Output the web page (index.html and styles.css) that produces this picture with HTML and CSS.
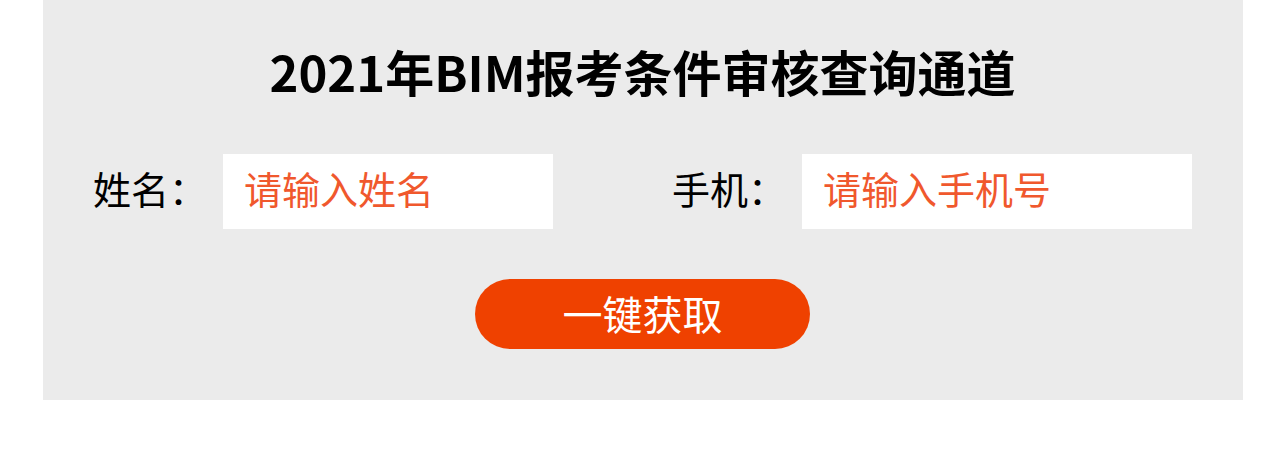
FILE: index.html
```html
<!DOCTYPE html>
<html lang="zh-CN">
  <head>
    <meta charset="UTF-8" />
    <meta name="viewport" content="width=device-width, initial-scale=1.0" />
    <title>BIM报考条件审核查询</title>
    <link rel="stylesheet" href="styles.css">
  </head>
  <body>
    <section class="query">
      <h1>2021年BIM报考条件审核查询通道</h1>
      <form class="form" onsubmit="return false">
        <div class="row">
          <label class="field">
            <span class="label">姓名：</span>
            <input type="text" placeholder="请输入姓名" />
          </label>
          <label class="field">
            <span class="label">手机：</span>
            <input class="phone" type="text" placeholder="请输入手机号" />
          </label>
        </div>
        <button class="btn" type="submit">一键获取</button>
      </form>
    </section>
  </body>
</html>
```

FILE: styles.css
```css
* {
  margin: 0;
  padding: 0;
  box-sizing: border-box;
}
body {
  font-family: "Noto Sans CJK SC", "Noto Sans", sans-serif;
  background: #fff;
}
.query {
  width: 1200px;
  height: 400px;
  margin-left: 43px;
  padding: 41px 51px 0 50px;
  background-color: #ebebeb;
}
.query h1 {
  font-size: 49px;
  line-height: 60px;
  font-weight: bold;
  color: #000;
  text-align: center;
  margin-bottom: 53px;
}
.row {
  display: flex;
  justify-content: space-between;
}
.field {
  display: flex;
  align-items: center;
}
.label {
  width: 130px;
  padding-bottom: 8px;
  font-size: 38px;
  color: #000;
}
.field input {
  width: 330px;
  height: 75px;
  border: none;
  outline: none;
  background: #fff;
  padding: 0 0 8px 21px;
  font-family: inherit;
  font-size: 38px;
  color: #333;
}
.field input.phone {
  width: 390px;
}
.field input::placeholder {
  color: #f0582d;
  opacity: 1;
}
.btn {
  display: block;
  width: 335px;
  height: 70px;
  margin: 50px auto 0;
  padding-bottom: 2px;
  border: none;
  border-radius: 35px;
  background-color: #ef4100;
  color: #fff;
  font-family: inherit;
  font-size: 40px;
  cursor: pointer;
}
```
